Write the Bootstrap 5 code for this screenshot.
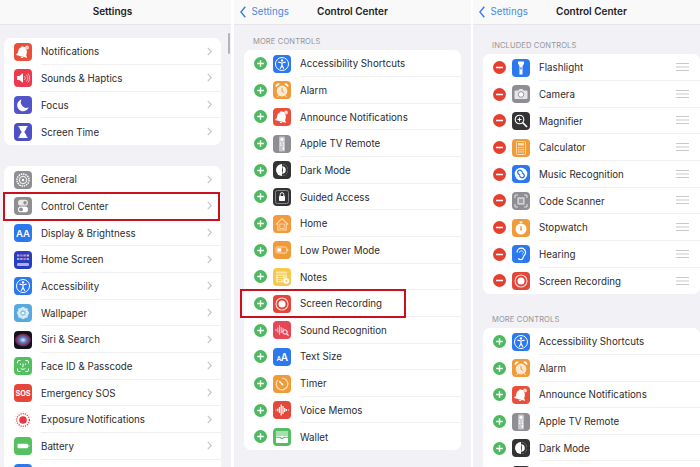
<!doctype html>
<html lang="en">
<head>
<meta charset="utf-8">
<title>Control Center</title>
<link href="https://cdn.jsdelivr.net/npm/bootstrap@5.3.0/dist/css/bootstrap.min.css" rel="stylesheet">
<style>
html,body{height:467px;overflow:hidden;background:#fff;}
body{font-family:Inter,"Liberation Sans",sans-serif;color:#2b2b2d;width:700px;}
.stage{height:467px;width:700px;overflow:hidden;}
.pane{flex:0 0 237px;width:237px;height:467px;background:#f1f1f6;overflow:hidden;position:relative;}
.pane-first{margin-left:-6px;margin-right:3px;}
.pane-second{margin-right:2px;}
.top-bar{height:24.8px;background:#f9f9f9;border-bottom:1px solid #e6e6e8;position:relative;font-size:10px;line-height:1;padding-bottom:1.5px;}
.top-title{font-weight:600;color:#1c1c1e;}
.back-link{position:absolute;left:6px;top:5.5px;height:12px;color:#4a86e8;font-size:9.75px;gap:5.5px;}
.back-link svg{width:6px;height:12px;}
.sect-label{font-size:7.6px;line-height:1;color:#96969a;padding-left:19px;letter-spacing:.1px;}
.sect-label-a{padding-top:13.5px;height:25.5px;}
.sect-label-b{padding-top:17.5px;height:29.5px;}
.sect-label-c{padding-top:22px;height:34px;}
.ios-card{margin:0 10px;border-radius:7px;border:0;background:#fff;overflow:hidden;}
.gap-top{margin-top:13.5px;}
.gap-mid{margin-top:21.5px;}
.ios-row.list-group-item{height:26.667px;padding:0 0 0 10px;border:0;background:#fff;color:#2b2b2d;font-size:9.75px;line-height:1;}
.app-ico{width:18px;height:18px;flex:0 0 18px;margin-right:9px;display:block;}
.round-btn{width:13px;height:13px;flex:0 0 13px;margin-right:6px;display:block;}
.row-body{height:100%;border-bottom:1px solid #f0f0f2;padding-right:9px;min-width:0;}
.row-body>span{padding-top:2px;}
.ios-row:last-child .row-body{border-bottom:0;}
.chev{width:5px;height:9px;}
.grip{width:13px;height:8px;margin-right:2.5px;}
.flag-box{position:absolute;border:2.4px solid #c9101c;pointer-events:none;}
.flag-one{left:9px;top:192px;width:217px;height:29px;}
.flag-two{left:6px;top:289px;width:166px;height:29px;}
.scroll-thumb{position:absolute;left:233.5px;top:33px;width:2px;height:21px;border-radius:1px;background:#b4b4b8;}
</style>
</head>
<body>
<svg width="0" height="0" class="position-absolute" aria-hidden="true">
<defs>
<symbol id="chev" viewBox="0 0 5 9"><path d="M.8.8 4.2 4.5.8 8.2" fill="none" stroke="#c5c5c8" stroke-width="1.2"/></symbol>
<symbol id="back" viewBox="0 0 6 12"><path d="M5.3.8.9 6l4.4 5.2" fill="none" stroke="#3f7fe6" stroke-width="1.5"/></symbol>
<symbol id="grip" viewBox="0 0 13 8"><path d="M0 .5h13M0 4h13M0 7.5h13" stroke="#c9c9cc" stroke-width="1"/></symbol>
<symbol id="plus" viewBox="0 0 13 13"><circle cx="6.5" cy="6.5" r="6.5" fill="#4fb862"/><path d="M6.5 3.2v6.6M3.2 6.5h6.6" stroke="#fff" stroke-width="1.4"/></symbol>
<symbol id="minus" viewBox="0 0 13 13"><circle cx="6.5" cy="6.5" r="6.5" fill="#e5402f"/><path d="M3 6.5h7" stroke="#fff" stroke-width="1.5"/></symbol>

<symbol id="notif" viewBox="0 0 18 18"><rect width="18" height="18" rx="4" fill="#e8503c"/><path d="M8.6 3.4c-.6-.2-1.100.1-1.300.7l-.1.4C5.600 4.600 4.700 6 4.300 7.900l-.6 2.300-1.400 1.100-.1.600 10.600 2.800.2-.6-.9-1.500.6-2.300c.5-1.900.1-3.500-1.100-4.500l.1-.4c.2-.6-.1-1.200-.7-1.400z" fill="#fff"/><circle cx="13" cy="4.600" r="2" fill="#fbd5cf"/><path d="M6.500 13.400a1.700 1.700 0 0 0 3.100.8z" fill="#fff"/></symbol>
<symbol id="sound" viewBox="0 0 18 18"><rect width="18" height="18" rx="4" fill="#e93a50"/><path d="M3 7h2.300L9 4.300v9.400L5.300 11H3z" fill="#fff"/><path d="M10.500 7a3 3 0 0 1 0 4M12.300 5.600a5 5 0 0 1 0 6.800M14 4.500a7 7 0 0 1 0 9" fill="none" stroke="#f7b4bd" stroke-width="1"/></symbol>
<symbol id="moon" viewBox="0 0 18 18"><rect width="18" height="18" rx="4" fill="#5254c7"/><path d="M7.600 3.400a6 6 0 1 0 7.200 7.900 5.600 5.600 0 0 1-7.200-7.900z" fill="#fff"/></symbol>
<symbol id="hour" viewBox="0 0 18 18"><rect width="18" height="18" rx="4" fill="#4d50c4"/><path d="M4.500 3h9v1.300h-.9c0 2.800-2.200 3.500-2.200 4.700s2.200 1.900 2.200 4.700h.9V15h-9v-1.300h.9c0-2.800 2.200-3.500 2.200-4.700S5.400 7.100 5.400 4.300h-.9z" fill="#fff"/></symbol>
<symbol id="gear" viewBox="0 0 18 18"><rect width="18" height="18" rx="4" fill="#8f8f93"/><circle cx="9" cy="9" r="6" fill="none" stroke="#fff" stroke-width="1.500" stroke-dasharray="1.500 .8"/><circle cx="9" cy="9" r="3.600" fill="none" stroke="#e8e8ea" stroke-width="1.300"/><circle cx="9" cy="9" r="1.200" fill="#fff"/></symbol>
<symbol id="toggles" viewBox="0 0 18 18"><rect width="18" height="18" rx="4" fill="#8f8f93"/><rect x="4" y="2.800" width="10" height="5.800" rx="2.900" fill="#e9e9ea"/><circle cx="11" cy="5.700" r="1.700" fill="#8f8f93"/><rect x="4" y="9.500" width="10" height="5.800" rx="2.900" fill="#fff"/><circle cx="7" cy="12.400" r="1.900" fill="#8f8f93"/></symbol>
<symbol id="homes" viewBox="0 0 18 18"><rect width="18" height="18" rx="4" fill="#2a3dc2"/><g fill="#9aa6ef"><rect x="3" y="3.500" width="2.400" height="2"/><rect x="6.200" y="3.500" width="2.400" height="2" fill="#e86aa0"/><rect x="9.400" y="3.500" width="2.400" height="2"/><rect x="12.600" y="3.500" width="2.400" height="2" fill="#f0c060"/><rect x="3" y="7" width="2.400" height="2" fill="#73d0c0"/><rect x="6.200" y="7" width="2.400" height="2"/><rect x="9.400" y="7" width="2.400" height="2" fill="#e86aa0"/><rect x="12.600" y="7" width="2.400" height="2"/></g><rect x="3" y="12" width="12" height="3" rx="1" fill="#a9b2f0"/></symbol>
<symbol id="access" viewBox="0 0 18 18"><rect width="18" height="18" rx="4" fill="#2c78ee"/><circle cx="9" cy="9" r="6.500" fill="none" stroke="#fff" stroke-width="1"/><circle cx="9" cy="5.400" r="1.200" fill="#fff"/><path d="M5.400 7.200 9 8l3.600-.8M9 8v2.500M9 10.500l-1.800 3.200M9 10.500l1.800 3.200" fill="none" stroke="#fff" stroke-width="1.200"/></symbol>
<symbol id="wall" viewBox="0 0 18 18"><rect width="18" height="18" rx="4" fill="#58a9de"/><g fill="#fff" fill-opacity=".72"><circle cx="9" cy="4.800" r="2"/><circle cx="9" cy="13.200" r="2"/><circle cx="4.800" cy="9" r="2"/><circle cx="13.200" cy="9" r="2"/><circle cx="6" cy="6" r="2"/><circle cx="12" cy="6" r="2"/><circle cx="6" cy="12" r="2"/><circle cx="12" cy="12" r="2"/></g><circle cx="9" cy="9" r="1.600" fill="#fff"/></symbol>
<symbol id="siri" viewBox="0 0 18 18"><rect width="18" height="18" rx="4" fill="#12121a"/><ellipse cx="9" cy="9" rx="8" ry="6.500" fill="url(#sg)"/></symbol>
<radialGradient id="sg" cx=".5" cy=".5" r=".6"><stop offset="0" stop-color="#e6eef8"/><stop offset=".35" stop-color="#5a7fc8"/><stop offset=".7" stop-color="#7a2c58"/><stop offset="1" stop-color="#161622"/></radialGradient>
<symbol id="faceid" viewBox="0 0 18 18"><rect width="18" height="18" rx="4" fill="#52c05f"/><path d="M3.500 6.500V5a1.500 1.500 0 0 1 1.500-1.500h1.500M11.500 3.500H13A1.500 1.500 0 0 1 14.500 5v1.500M14.500 11.500V13a1.500 1.500 0 0 1-1.500 1.500h-1.500M6.500 14.500H5A1.500 1.500 0 0 1 3.500 13v-1.500M6.400 6.600v1.400M11.600 6.600v1.400M9 6.600v3H8.300M6.600 11.400c1.400 1.200 3.400 1.200 4.800 0" fill="none" stroke="#fff" stroke-width="1"/></symbol>
<symbol id="expo" viewBox="0 0 18 18"><rect width="18" height="18" rx="4" fill="#fff"/><circle cx="9" cy="9" r="3.800" fill="#e8373f"/><circle cx="9" cy="9" r="6.300" fill="none" stroke="#e8373f" stroke-width="1.300" stroke-dasharray="1.100 1.100"/><circle cx="9" cy="9" r="8.200" fill="none" stroke="#f3a7aa" stroke-width=".7" stroke-dasharray=".8 2.400"/></symbol>
<symbol id="batt" viewBox="0 0 18 18"><rect width="18" height="18" rx="4" fill="#55c060"/><rect x="3.500" y="6.700" width="10.500" height="4.600" rx="1" fill="#fff"/><rect x="14.300" y="8" width="1" height="2" fill="#dff3e1"/></symbol>
<symbol id="alarm" viewBox="0 0 18 18"><rect width="18" height="18" rx="4" fill="#f19a38"/><circle cx="9" cy="10" r="5.400" fill="#fbe9d2"/><path d="M9 6.800v3.500l2.200 1.200" fill="none" stroke="#f19a38" stroke-width="1"/><path d="M3 5.600a2.300 2.300 0 0 1 3.300-2.500zM15 5.600a2.300 2.300 0 0 0-3.300-2.500zM5.600 14.400 4.500 16M12.400 14.400l1.100 1.600" fill="#fff" stroke="#fff" stroke-width=".8"/></symbol>
<symbol id="remote" viewBox="0 0 18 18"><rect width="18" height="18" rx="4" fill="#8f8f93"/><rect x="6" y="1.500" width="6" height="15" rx="1.200" fill="#c7c7ca"/><circle cx="9" cy="4.400" r="1.700" fill="#fff"/><g fill="#fff"><circle cx="7.700" cy="8" r=".7"/><circle cx="10.300" cy="8" r=".7"/><circle cx="7.700" cy="10.200" r=".7"/><circle cx="10.300" cy="10.200" r=".7"/><rect x="9.700" y="11.800" width="1.300" height="3" rx=".6"/></g></symbol>
<symbol id="dark" viewBox="0 0 18 18"><rect width="18" height="18" rx="4" fill="#333335"/><circle cx="9" cy="9" r="6" fill="#fff"/><path d="M9 3a6 6 0 0 1 0 12z" fill="#333335"/><path d="M9 5.200a3.800 3.800 0 0 1 0 7.600c1.200-2 1.200-5.600 0-7.600z" fill="#fff"/></symbol>
<symbol id="guided" viewBox="0 0 18 18"><rect width="18" height="18" rx="4" fill="#333335"/><rect x="2.500" y="2.500" width="13" height="13" rx="2" fill="none" stroke="#88888a" stroke-width="1"/><rect x="6" y="8" width="6" height="5" rx=".8" fill="#fff"/><path d="M7.200 8V6.500a1.800 1.800 0 0 1 3.600 0V8" fill="none" stroke="#fff" stroke-width="1"/></symbol>
<symbol id="house" viewBox="0 0 18 18"><rect width="18" height="18" rx="4" fill="#f29a3c"/><path d="M2.800 9.500 9 3.500l6.200 6M4.800 8.500V15h8.400V8.500" fill="none" stroke="#fbd5a8" stroke-width="1.200"/><rect x="6.800" y="9" width="4.400" height="4.400" fill="none" stroke="#fbd5a8" stroke-width=".9"/></symbol>
<symbol id="lowp" viewBox="0 0 18 18"><rect width="18" height="18" rx="4" fill="#f19a38"/><rect x="3" y="6" width="10.800" height="6" rx="1.300" fill="none" stroke="#fbdcb8" stroke-width="1"/><rect x="4.300" y="7.300" width="4" height="3.400" fill="#fff"/><rect x="14.300" y="8" width="1" height="2" fill="#fbdcb8"/></symbol>
<symbol id="notes" viewBox="0 0 18 18"><rect width="18" height="18" rx="4" fill="#f5c94e"/><rect x="3" y="3.500" width="11" height="11" rx="1" fill="#fbe6a8"/><path d="M3 6h11M5 8.500h5M5 10.500h5M5 12.500h3" stroke="#f5c94e" stroke-width="1"/><circle cx="13.500" cy="13" r="2.800" fill="#fff"/><path d="M13.500 11.700v2.600M12.200 13h2.600" stroke="#f0b93c" stroke-width=".7"/></symbol>
<symbol id="srec" viewBox="0 0 18 18"><rect width="18" height="18" rx="4" fill="#e2463a"/><circle cx="9" cy="9" r="6" fill="none" stroke="#fbd6d2" stroke-width="1.100"/><circle cx="9" cy="9" r="3.500" fill="#fff"/></symbol>
<symbol id="srecog" viewBox="0 0 18 18"><rect width="18" height="18" rx="4" fill="#e94655"/><path d="M3 8v2M4.800 6.500v5M6.500 4v10M8.200 6v6M10 7v4" stroke="#f9c5ca" stroke-width="1.100" fill="none"/><circle cx="12" cy="11" r="2.200" fill="#e94655" stroke="#fff" stroke-width="1"/><path d="m13.600 12.600 1.900 1.900" stroke="#fff" stroke-width="1.100"/></symbol>
<symbol id="timer" viewBox="0 0 18 18"><rect width="18" height="18" rx="4" fill="#f19a38"/><path d="M9 3.200a5.800 5.800 0 1 1-4.100 1.700" fill="none" stroke="#fbe0bf" stroke-width="1.300"/><path d="M6.300 6.300 9.400 9.400" stroke="#fff" stroke-width="1.300"/><circle cx="9.400" cy="9.400" r="1" fill="#fff"/></symbol>
<symbol id="voice" viewBox="0 0 18 18"><rect width="18" height="18" rx="4" fill="#e5473b"/><path d="M2.500 9h1M4.800 7.500v3M6.500 6v6M8.200 3.500v11M10 5v8M11.700 7v4M13.400 8v2M14.800 9h1" stroke="#fff" stroke-width="1.200" fill="none"/></symbol>
<symbol id="wallet" viewBox="0 0 18 18"><rect width="18" height="18" rx="4" fill="#55bd63"/><rect x="3" y="3" width="12" height="12" rx="1.300" fill="#fff"/><rect x="3" y="3" width="12" height="5" fill="#a9dfae"/><path d="M3 9.200h4l2 1.600 2-1.600h4" fill="none" stroke="#55bd63" stroke-width="1.100"/></symbol>
<symbol id="flash" viewBox="0 0 18 18"><rect width="18" height="18" rx="4" fill="#2c78ee"/><path d="M6 2.500h6v2.300l-1.500 2.400V15.500h-3V7.200L6 4.800z" fill="#fff"/><rect x="8.300" y="8.400" width="1.400" height="2" fill="#2c78ee"/></symbol>
<symbol id="camera" viewBox="0 0 18 18"><rect width="18" height="18" rx="4" fill="#8f8f93"/><path d="M3.500 5.500h3l1-1.500h3l1 1.500h3a1 1 0 0 1 1 1V13a1 1 0 0 1-1 1h-11a1 1 0 0 1-1-1V6.500a1 1 0 0 1 1-1z" fill="#e6e6e8"/><circle cx="9" cy="9.500" r="2.800" fill="#fff" stroke="#8f8f93" stroke-width=".9"/></symbol>
<symbol id="magn" viewBox="0 0 18 18"><rect width="18" height="18" rx="4" fill="#333335"/><circle cx="7.500" cy="7.500" r="4.300" fill="none" stroke="#fff" stroke-width="1.100"/><path d="M10.700 10.700 15 15" stroke="#fff" stroke-width="1.700"/><path d="M7.500 5.500v4M5.500 7.500h4" stroke="#fff" stroke-width="1"/></symbol>
<symbol id="calc" viewBox="0 0 18 18"><rect width="18" height="18" rx="4" fill="#f19a38"/><rect x="4.500" y="2.500" width="9" height="13" rx="1" fill="none" stroke="#fbdcb8" stroke-width="1"/><rect x="6" y="4" width="6" height="2.500" fill="#fbdcb8"/><g fill="#fbdcb8"><rect x="6" y="7.800" width="1.500" height="1.400"/><rect x="8.300" y="7.800" width="1.500" height="1.400"/><rect x="10.500" y="7.800" width="1.500" height="1.400"/><rect x="6" y="10" width="1.500" height="1.400"/><rect x="8.300" y="10" width="1.500" height="1.400"/><rect x="10.500" y="10" width="1.500" height="1.400"/><rect x="6" y="12.200" width="1.500" height="1.400"/><rect x="8.300" y="12.200" width="1.500" height="1.400"/><rect x="10.500" y="12.200" width="1.500" height="1.400"/></g></symbol>
<symbol id="shaz" viewBox="0 0 18 18"><rect width="18" height="18" rx="4" fill="#2c78ee"/><circle cx="9" cy="9" r="6.300" fill="#fff"/><path d="M10.500 6.700 9.300 5.800a2.100 2.100 0 0 0-3 0 2.100 2.100 0 0 0 0 3l1.800 1.700M7.500 11.300l1.200.9a2.100 2.100 0 0 0 3 0 2.100 2.100 0 0 0 0-3L9.900 7.500" fill="none" stroke="#2c78ee" stroke-width="1.300"/></symbol>
<symbol id="scan" viewBox="0 0 18 18"><rect width="18" height="18" rx="4" fill="#8f8f93"/><path d="M3 6V4a1 1 0 0 1 1-1h2M12 3h2a1 1 0 0 1 1 1v2M15 12v2a1 1 0 0 1-1 1h-2M6 15H4a1 1 0 0 1-1-1v-2" fill="none" stroke="#e0e0e2" stroke-width="1.100"/><rect x="5.300" y="5.300" width="7.400" height="7.400" rx=".8" fill="#cfcfd2"/><rect x="7" y="7" width="4" height="4" fill="#9d9da1"/></symbol>
<symbol id="stop" viewBox="0 0 18 18"><rect width="18" height="18" rx="4" fill="#f19a38"/><circle cx="9" cy="10" r="5.500" fill="#fff"/><rect x="7.700" y="2.500" width="2.600" height="1.500" fill="#fff"/><path d="M9 7v3.200" stroke="#f19a38" stroke-width="1.300"/><circle cx="9" cy="10.400" r="1" fill="#f19a38"/></symbol>
<symbol id="hear" viewBox="0 0 18 18"><rect width="18" height="18" rx="4" fill="#2c78ee"/><path d="M5 7.500a4.300 4.300 0 0 1 8.600 0c0 2.300-2 2.900-2.300 4.500-.3 1.800-1.300 2.700-2.700 2.700-1.100 0-1.900-.6-2.200-1.500" fill="none" stroke="#fff" stroke-width="1.200"/><path d="M7.300 7.700a2.100 2.100 0 0 1 4.100-.4c.2 1.100-.9 1.700-1.500 1.900" fill="none" stroke="#cfe0fb" stroke-width="1"/></symbol>
</defs>
</svg>

<div class="stage d-flex">

<section class="pane pane-first flex-shrink-0">
  <header class="top-bar d-flex align-items-center justify-content-center"><span class="top-title">Settings</span></header>
  <div class="scroll-thumb"></div>
  <ul class="list-group ios-card gap-top">
    <li class="list-group-item ios-row d-flex align-items-center"><svg class="app-ico"><use href="#notif"/></svg><div class="row-body flex-grow-1 d-flex align-items-center justify-content-between"><span>Notifications</span><svg class="chev"><use href="#chev"/></svg></div></li>
    <li class="list-group-item ios-row d-flex align-items-center"><svg class="app-ico"><use href="#sound"/></svg><div class="row-body flex-grow-1 d-flex align-items-center justify-content-between"><span>Sounds &amp; Haptics</span><svg class="chev"><use href="#chev"/></svg></div></li>
    <li class="list-group-item ios-row d-flex align-items-center"><svg class="app-ico"><use href="#moon"/></svg><div class="row-body flex-grow-1 d-flex align-items-center justify-content-between"><span>Focus</span><svg class="chev"><use href="#chev"/></svg></div></li>
    <li class="list-group-item ios-row d-flex align-items-center"><svg class="app-ico"><use href="#hour"/></svg><div class="row-body flex-grow-1 d-flex align-items-center justify-content-between"><span>Screen Time</span><svg class="chev"><use href="#chev"/></svg></div></li>
  </ul>
  <ul class="list-group ios-card gap-mid">
    <li class="list-group-item ios-row d-flex align-items-center"><svg class="app-ico"><use href="#gear"/></svg><div class="row-body flex-grow-1 d-flex align-items-center justify-content-between"><span>General</span><svg class="chev"><use href="#chev"/></svg></div></li>
    <li class="list-group-item ios-row d-flex align-items-center"><svg class="app-ico"><use href="#toggles"/></svg><div class="row-body flex-grow-1 d-flex align-items-center justify-content-between"><span>Control Center</span><svg class="chev"><use href="#chev"/></svg></div></li>
    <li class="list-group-item ios-row d-flex align-items-center"><svg class="app-ico" viewBox="0 0 18 18"><rect width="18" height="18" rx="4" fill="#2c78ee"/><text x="9" y="12.600" text-anchor="middle" font-size="9.500" font-weight="600" fill="#fff" font-family="Inter,sans-serif">AA</text></svg><div class="row-body flex-grow-1 d-flex align-items-center justify-content-between"><span>Display &amp; Brightness</span><svg class="chev"><use href="#chev"/></svg></div></li>
    <li class="list-group-item ios-row d-flex align-items-center"><svg class="app-ico"><use href="#homes"/></svg><div class="row-body flex-grow-1 d-flex align-items-center justify-content-between"><span>Home Screen</span><svg class="chev"><use href="#chev"/></svg></div></li>
    <li class="list-group-item ios-row d-flex align-items-center"><svg class="app-ico"><use href="#access"/></svg><div class="row-body flex-grow-1 d-flex align-items-center justify-content-between"><span>Accessibility</span><svg class="chev"><use href="#chev"/></svg></div></li>
    <li class="list-group-item ios-row d-flex align-items-center"><svg class="app-ico"><use href="#wall"/></svg><div class="row-body flex-grow-1 d-flex align-items-center justify-content-between"><span>Wallpaper</span><svg class="chev"><use href="#chev"/></svg></div></li>
    <li class="list-group-item ios-row d-flex align-items-center"><svg class="app-ico"><use href="#siri"/></svg><div class="row-body flex-grow-1 d-flex align-items-center justify-content-between"><span>Siri &amp; Search</span><svg class="chev"><use href="#chev"/></svg></div></li>
    <li class="list-group-item ios-row d-flex align-items-center"><svg class="app-ico"><use href="#faceid"/></svg><div class="row-body flex-grow-1 d-flex align-items-center justify-content-between"><span>Face ID &amp; Passcode</span><svg class="chev"><use href="#chev"/></svg></div></li>
    <li class="list-group-item ios-row d-flex align-items-center"><svg class="app-ico" viewBox="0 0 18 18"><rect width="18" height="18" rx="4" fill="#e8453a"/><text x="9" y="11.700" text-anchor="middle" font-size="7.300" font-weight="700" fill="#fff" font-family="Inter,sans-serif">SOS</text></svg><div class="row-body flex-grow-1 d-flex align-items-center justify-content-between"><span>Emergency SOS</span><svg class="chev"><use href="#chev"/></svg></div></li>
    <li class="list-group-item ios-row d-flex align-items-center"><svg class="app-ico"><use href="#expo"/></svg><div class="row-body flex-grow-1 d-flex align-items-center justify-content-between"><span>Exposure Notifications</span><svg class="chev"><use href="#chev"/></svg></div></li>
    <li class="list-group-item ios-row d-flex align-items-center"><svg class="app-ico"><use href="#batt"/></svg><div class="row-body flex-grow-1 d-flex align-items-center justify-content-between"><span>Battery</span><svg class="chev"><use href="#chev"/></svg></div></li>
    <li class="list-group-item ios-row d-flex align-items-center"><svg class="app-ico" viewBox="0 0 18 18"><rect width="18" height="18" rx="4" fill="#2c78ee"/></svg><div class="row-body flex-grow-1"></div></li>
  </ul>
  <div class="flag-box flag-one"></div>
</section>

<section class="pane pane-second flex-shrink-0">
  <header class="top-bar d-flex align-items-center justify-content-center">
    <a class="back-link d-flex align-items-center text-decoration-none"><svg><use href="#back"/></svg><span>Settings</span></a>
    <span class="top-title">Control Center</span>
  </header>
  <div class="sect-label sect-label-a text-uppercase">More Controls</div>
  <ul class="list-group ios-card">
    <li class="list-group-item ios-row d-flex align-items-center"><svg class="round-btn"><use href="#plus"/></svg><svg class="app-ico"><use href="#access"/></svg><div class="row-body flex-grow-1 d-flex align-items-center"><span>Accessibility Shortcuts</span></div></li>
    <li class="list-group-item ios-row d-flex align-items-center"><svg class="round-btn"><use href="#plus"/></svg><svg class="app-ico"><use href="#alarm"/></svg><div class="row-body flex-grow-1 d-flex align-items-center"><span>Alarm</span></div></li>
    <li class="list-group-item ios-row d-flex align-items-center"><svg class="round-btn"><use href="#plus"/></svg><svg class="app-ico"><use href="#notif"/></svg><div class="row-body flex-grow-1 d-flex align-items-center"><span>Announce Notifications</span></div></li>
    <li class="list-group-item ios-row d-flex align-items-center"><svg class="round-btn"><use href="#plus"/></svg><svg class="app-ico"><use href="#remote"/></svg><div class="row-body flex-grow-1 d-flex align-items-center"><span>Apple TV Remote</span></div></li>
    <li class="list-group-item ios-row d-flex align-items-center"><svg class="round-btn"><use href="#plus"/></svg><svg class="app-ico"><use href="#dark"/></svg><div class="row-body flex-grow-1 d-flex align-items-center"><span>Dark Mode</span></div></li>
    <li class="list-group-item ios-row d-flex align-items-center"><svg class="round-btn"><use href="#plus"/></svg><svg class="app-ico"><use href="#guided"/></svg><div class="row-body flex-grow-1 d-flex align-items-center"><span>Guided Access</span></div></li>
    <li class="list-group-item ios-row d-flex align-items-center"><svg class="round-btn"><use href="#plus"/></svg><svg class="app-ico"><use href="#house"/></svg><div class="row-body flex-grow-1 d-flex align-items-center"><span>Home</span></div></li>
    <li class="list-group-item ios-row d-flex align-items-center"><svg class="round-btn"><use href="#plus"/></svg><svg class="app-ico"><use href="#lowp"/></svg><div class="row-body flex-grow-1 d-flex align-items-center"><span>Low Power Mode</span></div></li>
    <li class="list-group-item ios-row d-flex align-items-center"><svg class="round-btn"><use href="#plus"/></svg><svg class="app-ico"><use href="#notes"/></svg><div class="row-body flex-grow-1 d-flex align-items-center"><span>Notes</span></div></li>
    <li class="list-group-item ios-row d-flex align-items-center"><svg class="round-btn"><use href="#plus"/></svg><svg class="app-ico"><use href="#srec"/></svg><div class="row-body flex-grow-1 d-flex align-items-center"><span>Screen Recording</span></div></li>
    <li class="list-group-item ios-row d-flex align-items-center"><svg class="round-btn"><use href="#plus"/></svg><svg class="app-ico"><use href="#srecog"/></svg><div class="row-body flex-grow-1 d-flex align-items-center"><span>Sound Recognition</span></div></li>
    <li class="list-group-item ios-row d-flex align-items-center"><svg class="round-btn"><use href="#plus"/></svg><svg class="app-ico" viewBox="0 0 18 18"><rect width="18" height="18" rx="4" fill="#2c78ee"/><text x="5.800" y="12.500" text-anchor="middle" font-size="6.500" font-weight="600" fill="#fff" font-family="Inter,sans-serif">A</text><text x="11.500" y="12.500" text-anchor="middle" font-size="10" font-weight="600" fill="#fff" font-family="Inter,sans-serif">A</text></svg><div class="row-body flex-grow-1 d-flex align-items-center"><span>Text Size</span></div></li>
    <li class="list-group-item ios-row d-flex align-items-center"><svg class="round-btn"><use href="#plus"/></svg><svg class="app-ico"><use href="#timer"/></svg><div class="row-body flex-grow-1 d-flex align-items-center"><span>Timer</span></div></li>
    <li class="list-group-item ios-row d-flex align-items-center"><svg class="round-btn"><use href="#plus"/></svg><svg class="app-ico"><use href="#voice"/></svg><div class="row-body flex-grow-1 d-flex align-items-center"><span>Voice Memos</span></div></li>
    <li class="list-group-item ios-row d-flex align-items-center"><svg class="round-btn"><use href="#plus"/></svg><svg class="app-ico"><use href="#wallet"/></svg><div class="row-body flex-grow-1 d-flex align-items-center"><span>Wallet</span></div></li>
  </ul>
  <div class="flag-box flag-two"></div>
</section>

<section class="pane flex-shrink-0">
  <header class="top-bar d-flex align-items-center justify-content-center">
    <a class="back-link d-flex align-items-center text-decoration-none"><svg><use href="#back"/></svg><span>Settings</span></a>
    <span class="top-title">Control Center</span>
  </header>
  <div class="sect-label sect-label-b text-uppercase">Included Controls</div>
  <ul class="list-group ios-card">
    <li class="list-group-item ios-row d-flex align-items-center"><svg class="round-btn"><use href="#minus"/></svg><svg class="app-ico"><use href="#flash"/></svg><div class="row-body flex-grow-1 d-flex align-items-center justify-content-between"><span>Flashlight</span><svg class="grip"><use href="#grip"/></svg></div></li>
    <li class="list-group-item ios-row d-flex align-items-center"><svg class="round-btn"><use href="#minus"/></svg><svg class="app-ico"><use href="#camera"/></svg><div class="row-body flex-grow-1 d-flex align-items-center justify-content-between"><span>Camera</span><svg class="grip"><use href="#grip"/></svg></div></li>
    <li class="list-group-item ios-row d-flex align-items-center"><svg class="round-btn"><use href="#minus"/></svg><svg class="app-ico"><use href="#magn"/></svg><div class="row-body flex-grow-1 d-flex align-items-center justify-content-between"><span>Magnifier</span><svg class="grip"><use href="#grip"/></svg></div></li>
    <li class="list-group-item ios-row d-flex align-items-center"><svg class="round-btn"><use href="#minus"/></svg><svg class="app-ico"><use href="#calc"/></svg><div class="row-body flex-grow-1 d-flex align-items-center justify-content-between"><span>Calculator</span><svg class="grip"><use href="#grip"/></svg></div></li>
    <li class="list-group-item ios-row d-flex align-items-center"><svg class="round-btn"><use href="#minus"/></svg><svg class="app-ico"><use href="#shaz"/></svg><div class="row-body flex-grow-1 d-flex align-items-center justify-content-between"><span>Music Recognition</span><svg class="grip"><use href="#grip"/></svg></div></li>
    <li class="list-group-item ios-row d-flex align-items-center"><svg class="round-btn"><use href="#minus"/></svg><svg class="app-ico"><use href="#scan"/></svg><div class="row-body flex-grow-1 d-flex align-items-center justify-content-between"><span>Code Scanner</span><svg class="grip"><use href="#grip"/></svg></div></li>
    <li class="list-group-item ios-row d-flex align-items-center"><svg class="round-btn"><use href="#minus"/></svg><svg class="app-ico"><use href="#stop"/></svg><div class="row-body flex-grow-1 d-flex align-items-center justify-content-between"><span>Stopwatch</span><svg class="grip"><use href="#grip"/></svg></div></li>
    <li class="list-group-item ios-row d-flex align-items-center"><svg class="round-btn"><use href="#minus"/></svg><svg class="app-ico"><use href="#hear"/></svg><div class="row-body flex-grow-1 d-flex align-items-center justify-content-between"><span>Hearing</span><svg class="grip"><use href="#grip"/></svg></div></li>
    <li class="list-group-item ios-row d-flex align-items-center"><svg class="round-btn"><use href="#minus"/></svg><svg class="app-ico"><use href="#srec"/></svg><div class="row-body flex-grow-1 d-flex align-items-center justify-content-between"><span>Screen Recording</span><svg class="grip"><use href="#grip"/></svg></div></li>
  </ul>
  <div class="sect-label sect-label-c text-uppercase">More Controls</div>
  <ul class="list-group ios-card">
    <li class="list-group-item ios-row d-flex align-items-center"><svg class="round-btn"><use href="#plus"/></svg><svg class="app-ico"><use href="#access"/></svg><div class="row-body flex-grow-1 d-flex align-items-center"><span>Accessibility Shortcuts</span></div></li>
    <li class="list-group-item ios-row d-flex align-items-center"><svg class="round-btn"><use href="#plus"/></svg><svg class="app-ico"><use href="#alarm"/></svg><div class="row-body flex-grow-1 d-flex align-items-center"><span>Alarm</span></div></li>
    <li class="list-group-item ios-row d-flex align-items-center"><svg class="round-btn"><use href="#plus"/></svg><svg class="app-ico"><use href="#notif"/></svg><div class="row-body flex-grow-1 d-flex align-items-center"><span>Announce Notifications</span></div></li>
    <li class="list-group-item ios-row d-flex align-items-center"><svg class="round-btn"><use href="#plus"/></svg><svg class="app-ico"><use href="#remote"/></svg><div class="row-body flex-grow-1 d-flex align-items-center"><span>Apple TV Remote</span></div></li>
    <li class="list-group-item ios-row d-flex align-items-center"><svg class="round-btn"><use href="#plus"/></svg><svg class="app-ico"><use href="#dark"/></svg><div class="row-body flex-grow-1 d-flex align-items-center"><span>Dark Mode</span></div></li>
    <li class="list-group-item ios-row d-flex align-items-center"><svg class="round-btn"><use href="#plus"/></svg><svg class="app-ico"><use href="#guided"/></svg><div class="row-body flex-grow-1"></div></li>
  </ul>
</section>

</div>
<script src="https://cdn.jsdelivr.net/npm/bootstrap@5.3.0/dist/js/bootstrap.bundle.min.js"></script>
</body>
</html>
